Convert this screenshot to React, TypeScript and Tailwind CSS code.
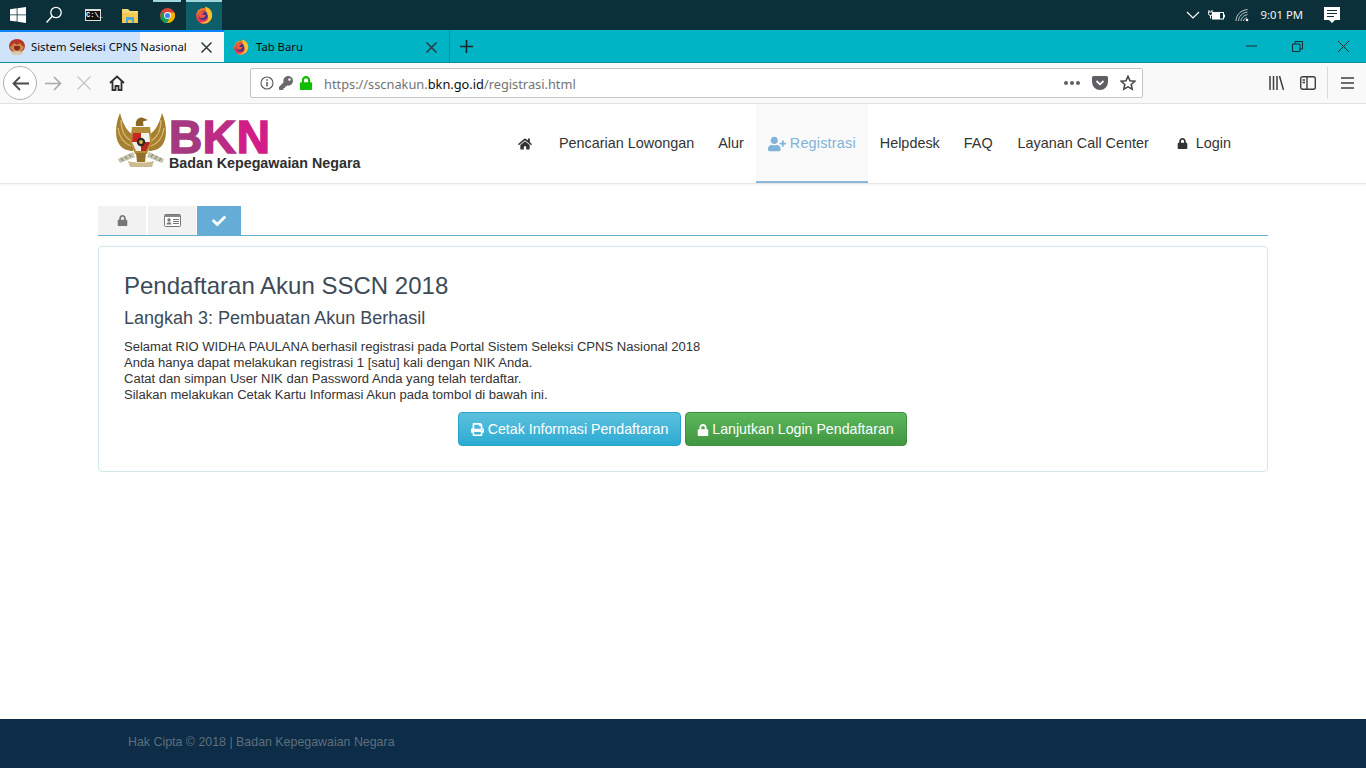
import React from 'react';
import { FaHome, FaUserPlus, FaLock, FaPrint, FaCheck, FaKey } from 'react-icons/fa';

const FirefoxIcon = ({ size = 18 }: { size?: number }) => (
  <svg width={size} height={size} viewBox="0 0 20 20">
    <defs>
      <linearGradient id="fxBody" x1="0" y1="0" x2="0.6" y2="1">
        <stop offset="0" stopColor="#f5a623" />
        <stop offset="0.5" stopColor="#ee3d3d" />
        <stop offset="1" stopColor="#e6306a" />
      </linearGradient>
    </defs>
    <circle cx="10" cy="11" r="8.800" fill="url(#fxBody)" />
    <path d="M11 .5c6 1.500 8.500 6 8 10.500-.5 4.500-4 8.500-9 8.500-2 0-3.500-.5-5-1.500 4 1 8.500-.5 9.500-4 .7-2.500-.5-5-3-6 .8-1.500.8-4.500-.5-7.500z" fill="#ffbe2e" />
    <circle cx="9" cy="10.500" r="5" fill="#45318f" />
    <path d="M5 7c2-1.500 5-1.500 6 0-1 1-3 1-3.200 2.300 1 1.200 3 .8 4 .2.300 2.500-3 5-6 3.500C4 12 3.500 9 5 7z" fill="#f4593a" />
  </svg>
);

const ChromeIcon = () => (
  <svg width="15" height="15" viewBox="0 0 20 20">
    <circle cx="10" cy="10" r="10" fill="#db4437" />
    <path d="M10 10 1.300 5 .9 15l5.100 5H10l1 0 4-6z" fill="#0f9d58" />
    <path d="M10 6h9.200A10 10 0 0 1 10 20l-1-.1L14 12z" fill="#f4b400" />
    <circle cx="10" cy="10" r="4.600" fill="#fff" />
    <circle cx="10" cy="10" r="3.500" fill="#4285f4" />
  </svg>
);

const Favicon = () => (
  <svg width="16" height="16" viewBox="0 0 16 16">
    <ellipse cx="8" cy="7" rx="8" ry="7" fill="#b5362a" />
    <path d="M1 8c2-1 3-3 4-4l3 2 3-2c1 1 2 3 4 4-1 3-3 5-7 5S2 11 1 8z" fill="#c98b4a" />
    <path d="M5 7h6v3l-3 2-3-2z" fill="#8c2a20" />
    <ellipse cx="8" cy="14" rx="6" ry="2" fill="#d9c9a8" />
  </svg>
);

const Garuda = () => (
  <svg width="52" height="56" viewBox="0 0 52 56">
    <path d="M5 1C1 10-1 24 4 32c3 5 9 7 14 7l2-15C13 21 8 13 5 1z" fill="#a68032" />
    <path d="M47 1c4 9 6 23 1 31-3 5-9 7-14 7l-2-15c7-3 12-11 15-23z" fill="#a68032" />
    <path d="M6 8c0 9 3 17 10 21M3 16c1 8 5 15 13 18M46 8c0 9-3 17-10 21M49 16c-1 8-5 15-13 18" fill="none" stroke="#d9b76c" strokeWidth="1.300" />
    <path d="M21 14c-1-5 2-9 6-8.500l6 2.500-5 1.500.5 4.500z" fill="#8a6620" />
    <path d="M17 15h18l2 15-5 12H20l-5-12z" fill="#b58c38" />
    <path d="M18 21h8v9h-9z" fill="#c8281f" />
    <path d="M26 21h8l1 9h-9z" fill="#f3f3ee" />
    <path d="M17 30h9v9h-5z" fill="#efefe8" />
    <path d="M26 30h9l-4 9h-5z" fill="#b8261c" />
    <circle cx="26" cy="30" r="4.200" fill="#2b2b22" />
    <circle cx="26" cy="30" r="1.900" fill="#e0b84a" />
    <path d="M18 40 3 47l2 4 15-6zM34 40l15 7-2 4-15-6z" fill="#c4c1af" />
    <path d="M6 46l2 3M10 44l2 3M14 42l2 3M46 46l-2 3M42 44l-2 3M38 42l-2 3" stroke="#7f7a60" strokeWidth="1" />
    <path d="M13 49c8 2 18 2 26 0l-2 6H15z" fill="#cbbb8e" />
    <path d="M21 41h10l-1 9h-8z" fill="#94712a" />
  </svg>
);

const Taskbar = () => (
  <div className="h-[30px] shrink-0 bg-[#0b303a] flex items-center relative">
    <div className="w-[36px] flex justify-center">
      <svg width="16" height="16" viewBox="0 0 16 16" fill="#fff">
        <path d="M0 2.300 6.700 1.300V7.500H0zM7.500 1.200 16 0V7.500H7.500zM0 8.300H6.700V14.600L0 13.700zM7.500 8.300H16V16L7.500 14.800z" />
      </svg>
    </div>
    <div className="w-[36px] flex justify-center">
      <svg width="18" height="18" viewBox="0 0 18 18" fill="none" stroke="#fff" strokeWidth="1.300">
        <circle cx="11" cy="6.500" r="5.200" />
        <path d="M7.200 10.300 1.500 16.500" />
      </svg>
    </div>
    <div className="w-[38px] flex justify-center ml-[2px]">
      <div className="w-[16px] h-[12px] bg-[#111] border border-[#ddd] border-t-[2px] text-[7px] leading-[8px] text-white font-['Liberation_Mono',monospace] font-bold">C:\_</div>
    </div>
    <div className="w-[36px] flex justify-center">
      <svg width="16" height="15" viewBox="0 0 16 15">
        <path d="M0 1h6l2 2h8v3H0z" fill="#f6d776" />
        <path d="M0 5h16v10H0z" fill="#f3c94f" />
        <path d="M4 9h8v6h-2v-3H6v3H4z" fill="#4fa7dc" />
      </svg>
    </div>
    <div className="w-[28px] flex justify-center ml-[5px] h-full items-center border-t-[2px] border-[#9fd6dc] pb-[2px]">
      <ChromeIcon />
    </div>
    <div className="w-[36px] h-full ml-[5px] bg-[#0e5f6a] border-t-[2px] border-[#9fd6dc] flex justify-center items-center pb-[2px]">
      <FirefoxIcon />
    </div>
    <div className="ml-auto flex items-center text-white">
      <svg width="14" height="8" viewBox="0 0 14 8" fill="none" stroke="#fff" strokeWidth="1.200">
        <path d="M1 1l6 6 6-6" />
      </svg>
      <svg className="ml-[8px]" width="17" height="12" viewBox="0 0 17 12" fill="none" stroke="#fff" strokeWidth="1">
        <rect x="4.500" y="3.500" width="11" height="6.500" />
        <rect x="5" y="4" width="6.500" height="5.500" fill="#fff" />
        <path d="M16.500 5.500v3M1 1v2M4 1v2M.5 3h4v1.500a2 2 0 0 1-4 0zM2.500 6.500v3" />
      </svg>
      <svg className="ml-[10px]" width="14" height="14" viewBox="0 0 14 14" fill="none" stroke="#cfd8da" strokeWidth=".9">
        <path d="M1 13C1 7 6 2 12.500 1.500M3.500 13c0-4.500 4-8.500 9-9M6 13c0-3 3-6 6.500-6.400M8.500 13c0-1.500 1.500-3 3.500-3.300" />
        <circle cx="12" cy="12" r="1.300" fill="#fff" stroke="none" />
      </svg>
      <span className="ml-[12px] text-[11.3px] font-['Noto_Sans',sans-serif] text-[#f2f5f5]">9:01 PM</span>
      <svg className="ml-[21px] mr-[26px]" width="16" height="17" viewBox="0 0 16 17">
        <path d="M0 0h16v13h-5l-3 3-3-3H0z" fill="#fff" />
        <path d="M3 3.500h10M3 6.500h10M3 9.500h7" stroke="#0b303a" strokeWidth="1" />
      </svg>
    </div>
  </div>
);

const TabClose = () => (
  <svg width="11" height="11" viewBox="0 0 11 11" stroke="#2b3a3d" strokeWidth="1.500">
    <path d="M.5.500l10 10M10.500.500l-10 10" />
  </svg>
);

const TabBar = () => (
  <div className="h-[33px] shrink-0 bg-[#00b4c5] flex font-['Noto_Sans',sans-serif] text-[11.3px] text-[#0c0c0d] border-b border-[#0b8f9c]">
    <div className="w-[224px] bg-[#f9f9fa] border-t-[2px] border-[#0a84ff] relative flex items-center pl-[9px]">
      <div className="absolute left-0 top-0 bottom-0 w-[140px] bg-[#cfe3fb]" />
      <div className="relative flex items-center w-full">
        <Favicon />
        <span className="ml-[6px] whitespace-nowrap">Sistem Seleksi CPNS Nasional</span>
        <div className="ml-auto mr-[12px]"><TabClose /></div>
      </div>
    </div>
    <div className="w-[226px] flex items-center pl-[9px] pt-[2px] border-r border-[#0b8f9c]">
      <FirefoxIcon size={16} />
      <span className="ml-[7px]">Tab Baru</span>
      <div className="ml-auto mr-[12px]"><TabClose /></div>
    </div>
    <div className="ml-[10px] flex items-center">
      <svg width="13" height="13" viewBox="0 0 13 13" stroke="#14282c" strokeWidth="1.600">
        <path d="M6.500 0v13M0 6.500h13" />
      </svg>
    </div>
    <div className="ml-auto flex items-center h-full">
      <div className="w-[46px] flex justify-center">
        <svg width="11" height="2" viewBox="0 0 11 2" stroke="#1a2b2e"><path d="M0 1h11" /></svg>
      </div>
      <div className="w-[46px] flex justify-center">
        <svg width="11" height="11" viewBox="0 0 11 11" fill="none" stroke="#1a2b2e">
          <path d="M.5 3h7.500v7.500H.5zM3 3V.5h7.500V8H8" />
        </svg>
      </div>
      <div className="w-[46px] flex justify-center">
        <svg width="11" height="11" viewBox="0 0 11 11" stroke="#1a2b2e"><path d="M0 0l11 11M11 0 0 11" /></svg>
      </div>
    </div>
  </div>
);

const Toolbar = () => (
  <div className="h-[41px] shrink-0 bg-[#f9f9fa] border-b border-[#e1e1e2] flex items-center">
    <div className="ml-[3px] w-[34px] h-[34px] rounded-full border border-[#b1b1b3] bg-white flex items-center justify-center">
      <svg width="17" height="15" viewBox="0 0 17 15" fill="none" stroke="#4a4a4f" strokeWidth="1.800">
        <path d="M17 7.500H2M8 1 1.500 7.500 8 14" />
      </svg>
    </div>
    <svg className="ml-[8px]" width="17" height="15" viewBox="0 0 17 15" fill="none" stroke="#a9a9ac" strokeWidth="1.600">
      <path d="M0 7.500h15M9 1l6.500 6.500L9 14" />
    </svg>
    <svg className="ml-[15px]" width="14" height="14" viewBox="0 0 14 14" stroke="#c6c6c8" strokeWidth="1.400">
      <path d="M.5.500l13 13M13.500.500l-13 13" />
    </svg>
    <svg className="ml-[18px]" width="16" height="16" viewBox="0 0 16 16" fill="none" stroke="#2f2f33" strokeWidth="1.800">
      <path d="M1 8l7-6.500L15 8M3.500 6.500V15h3v-4h3v4h3V6.500" />
    </svg>
    <div className="ml-[125px] w-[893px] h-[30px] bg-white border border-[#c5c5c7] rounded-[2px] flex items-center pl-[9px] pr-[6px]">
      <svg width="14" height="14" viewBox="0 0 14 14" fill="none" stroke="#5a5a5e" strokeWidth="1.100">
        <circle cx="7" cy="7" r="6" />
        <path d="M7 6v4.500M7 3.200v1.500" strokeWidth="1.500" />
      </svg>
      <FaKey className="ml-[5px] text-[#6a6a6e] text-[14px]" />
      <FaLock className="ml-[6px] text-[#12bc00] text-[14px]" />
      <span className="ml-[11px] pt-[3px] text-[12.8px] font-['Noto_Sans',sans-serif] text-[#737373]">
        https://sscnakun.<span className="text-[#0c0c0d]">bkn.go.id</span>/registrasi.html
      </span>
      <div className="ml-auto flex items-center">
        <div className="flex gap-[2px]">
          <div className="w-[4px] h-[4px] rounded-full bg-[#5f5f63]" />
          <div className="w-[4px] h-[4px] rounded-full bg-[#5f5f63]" />
          <div className="w-[4px] h-[4px] rounded-full bg-[#5f5f63]" />
        </div>
        <svg className="ml-[12px]" width="16" height="14" viewBox="0 0 16 14">
          <path d="M1.500 0h13A1.500 1.500 0 0 1 16 1.500V6a8 8 0 0 1-16 0V1.500A1.500 1.500 0 0 1 1.500 0z" fill="#5f5f63" />
          <path d="M4.500 5 8 8.300 11.500 5" fill="none" stroke="#fff" strokeWidth="1.800" />
        </svg>
        <svg className="ml-[12px]" width="16" height="16" viewBox="0 0 16 16" fill="none" stroke="#4a4a4f" strokeWidth="1.600">
          <path d="M8 1.300 10 5.800l4.800.5-3.600 3.200 1 4.700L8 11.800l-4.200 2.400 1-4.700L1.200 6.300 6 5.800z" />
        </svg>
      </div>
    </div>
    <svg className="ml-[126px]" width="15" height="14" viewBox="0 0 15 14" stroke="#3f3f43" strokeWidth="1.500">
      <path d="M1 0v14M4.500 0v14M8 0v14M10.500 0l4 14" />
    </svg>
    <svg className="ml-[16px]" width="16" height="14" viewBox="0 0 16 14" fill="none" stroke="#3f3f43" strokeWidth="1.400">
      <rect x=".7" y=".7" width="14.600" height="12.600" rx="2" />
      <path d="M7 1v12M2.500 4H5M2.500 6.500H5" />
    </svg>
    <div className="ml-[11px] w-px h-[32px] bg-[#dcdcde]" />
    <svg className="ml-[13px]" width="13" height="12" viewBox="0 0 13 12" stroke="#3f3f43" strokeWidth="1.600">
      <path d="M0 1h13M0 6h13M0 11h13" />
    </svg>
  </div>
);

const Logo = () => (
  <div className="flex items-start ml-[17px] pt-[8px]">
    <Garuda />
    <div className="ml-[2px] flex flex-col pt-[9px]">
      <span className="text-[46px] leading-[33px] font-bold [-webkit-text-stroke:1.500px] tracking-[0.6px]">
        <span className="text-[#a5397f]">B</span>
        <span className="text-[#bb2c85]">K</span>
        <span className="text-[#d21c88]">N</span>
      </span>
      <span className="text-[14.3px] leading-[17px] font-bold text-[#2e2e2e] whitespace-nowrap mt-[1px]">Badan Kepegawaian Negara</span>
    </div>
  </div>
);

const NavItem = ({ active, children }: { active?: boolean; children: React.ReactNode }) => (
  <a className={`h-full px-3 pt-[2px] flex items-center gap-[4px] border-b-2 whitespace-nowrap ${active ? 'bg-[#fafafa] border-[#8ab9db] text-[#7fb3d9]' : 'border-transparent text-[#333]'}`}>
    {children}
  </a>
);

const Header = () => (
  <div className="h-[80px] shrink-0 bg-white border-b border-[#e6e6e6] shadow-[0_1px_2px_rgba(0,0,0,0.05)] flex justify-center">
    <div className="w-[1170px] flex justify-between">
      <Logo />
      <nav className="flex items-stretch text-[14.4px] pr-[25px] h-[79px]">
        <NavItem><FaHome className="text-[14px] text-[#333]" /></NavItem>
        <div className="w-[3px]" />
        <NavItem>Pencarian Lowongan</NavItem>
        <NavItem>Alur</NavItem>
        <NavItem active><FaUserPlus className="text-[18px]" /><span className="tracking-[0.2px]">Registrasi</span></NavItem>
        <NavItem>Helpdesk</NavItem>
        <NavItem>FAQ</NavItem>
        <div className="w-px" />
        <NavItem>Layanan Call Center</NavItem>
        <NavItem><FaLock className="text-[11px] mx-[4px]" />Login</NavItem>
      </nav>
    </div>
  </div>
);

const Steps = () => (
  <div className="h-[30px] border-b border-[#66afcf] flex items-stretch">
    <div className="w-[48px] h-[29px] bg-[#f2f2f2] flex items-center justify-center"><FaLock className="text-[11px] text-[#777]" /></div>
    <div className="w-[48px] h-[29px] ml-[2px] bg-[#f2f2f2] flex items-center justify-center">
      <svg width="17" height="13" viewBox="0 0 17 13">
        <rect x=".5" y=".5" width="16" height="12" rx="1" fill="#fff" stroke="#777" />
        <rect x="1" y="1" width="15" height="2" fill="#888" />
        <circle cx="5" cy="6" r="1.700" fill="#777" />
        <path d="M2.500 10.500c0-3 5-3 5 0z" fill="#777" />
        <path d="M9 5.500h6M9 7.500h6M9 9.500h6" stroke="#777" />
      </svg>
    </div>
    <div className="w-[44px] h-[29px] ml-[1px] bg-[#65add6] flex items-center justify-center"><FaCheck className="text-[14px] text-white" /></div>
  </div>
);

const Card = () => (
  <div className="mt-[10px] h-[226px] border border-[#d3e8ed] rounded-[4px] px-[25px] pt-[24px] text-[#3d4a57]">
    <h2 className="text-[24px] leading-[30px]">Pendaftaran Akun SSCN 2018</h2>
    <h4 className="mt-[5px] text-[18px] leading-[24px]">Langkah 3: Pembuatan Akun Berhasil</h4>
    <div className="mt-[9px] text-[13.05px] leading-[16px] text-[#333]">
      <p>Selamat RIO WIDHA PAULANA berhasil registrasi pada Portal Sistem Seleksi CPNS Nasional 2018</p>
      <p>Anda hanya dapat melakukan registrasi 1 [satu] kali dengan NIK Anda.</p>
      <p>Catat dan simpan User NIK dan Password Anda yang telah terdaftar.</p>
      <p>Silakan melakukan Cetak Kartu Informasi Akun pada tombol di bawah ini.</p>
    </div>
    <div className="mt-[9px] flex justify-center gap-[4px] -translate-x-[1px]">
      <button className="h-[34px] w-[223px] pt-[1px] pl-[1px] rounded-[4px] border border-[#28a4c9] bg-gradient-to-b from-[#5bc0de] to-[#2aabd2] text-white text-[14.2px] flex items-center justify-center gap-[4px]">
        <FaPrint className="text-[13px]" />Cetak Informasi Pendaftaran
      </button>
      <button className="h-[34px] w-[222px] pt-[1px] rounded-[4px] border border-[#3e8f3e] bg-gradient-to-b from-[#5cb85c] to-[#419641] text-white text-[14.2px] flex items-center justify-center gap-[3px]">
        <FaLock className="text-[12px]" />Lanjutkan Login Pendaftaran
      </button>
    </div>
  </div>
);

export default function App() {
  return (
    <div className="h-[768px] w-[1366px] flex flex-col bg-white overflow-hidden font-['Liberation_Sans',Arial,sans-serif]">
      <Taskbar />
      <TabBar />
      <Toolbar />
      <Header />
      <main className="flex-1 flex justify-center pt-[22px]">
        <div className="w-[1170px]">
          <Steps />
          <Card />
        </div>
      </main>
      <footer className="h-[49px] shrink-0 bg-[#0c2c47] flex items-center pl-[128px] pb-[3px] text-[12.4px] text-[#5f6f7c]">
        Hak Cipta © 2018 | Badan Kepegawaian Negara
      </footer>
    </div>
  );
}
